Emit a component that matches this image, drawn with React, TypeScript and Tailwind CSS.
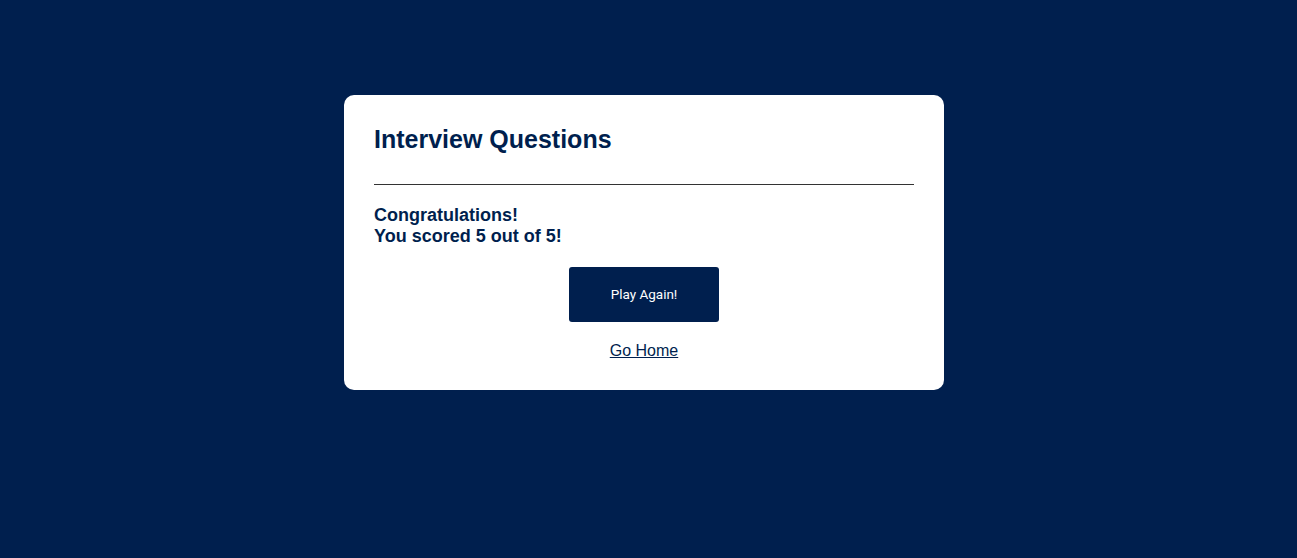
import React from "react";

const App: React.FC = () => {
  return (
    <div className="min-h-[558px] w-full bg-[#001f4e] flex justify-center pt-[95px] pr-[9px] font-['Liberation_Sans',Arial,sans-serif]">
      <div className="w-[600px] h-fit bg-white rounded-[10px] px-[30px] pt-[30px] pb-[30px] flex flex-col">
        <h1 className="text-[25px] leading-[28px] font-bold text-[#001f4e]">
          Interview Questions
        </h1>
        <hr className="mt-[31px] border-0 border-t border-[#333333]" />
        <p className="mt-[20px] text-[18px] leading-[21px] font-bold text-[#001f4e]">
          Congratulations!
          <br />
          You scored 5 out of 5!
        </p>
        <div className="mt-[20px] flex flex-col items-center">
          <button className="w-[150px] h-[55px] rounded-[3px] bg-[#001f4e] text-white text-[13.5px] font-normal font-['Roboto',sans-serif]">
            Play Again!
          </button>
          <a
            href="#"
            className="mt-[20px] text-[16px] leading-[18px] text-[#001f4e] underline"
          >
            Go Home
          </a>
        </div>
      </div>
    </div>
  );
};

export default App;
